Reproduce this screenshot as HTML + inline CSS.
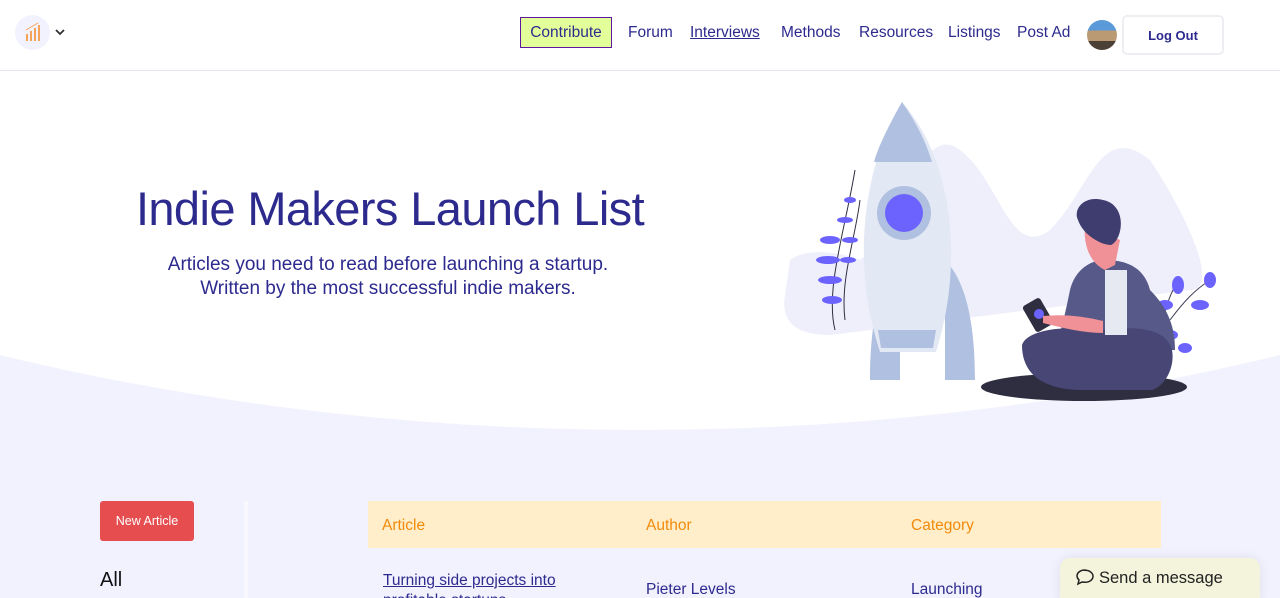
<!DOCTYPE html>
<html><head><meta charset="utf-8"><style>
*{margin:0;padding:0;box-sizing:border-box}
html,body{width:1280px;height:598px;overflow:hidden}
body{background:#f2f2fe;font-family:"Liberation Sans",sans-serif;position:relative}
.hero{position:absolute;left:-1200px;top:-1970px;width:3680px;height:2400px;border-radius:50%;background:#fff}
nav{position:absolute;left:0;top:0;width:1280px;height:71px;background:#fff;border-bottom:1px solid #e6e6ee}
.logo{position:absolute;left:15px;top:15px;width:35px;height:35px;border-radius:50%;background:#f2f2fe}
.chev{position:absolute;left:54px;top:26px}
.l{position:absolute;top:24px;font-size:15.5px;color:#2d2a8e;white-space:nowrap}
.contrib{position:absolute;left:520px;top:17px;width:92px;height:31px;background:#e3ff9a;border:1px solid #5b1aa0;font-size:15.5px;color:#2d2a8e;text-align:center;line-height:29px}
.avatar{position:absolute;left:1087px;top:20px;width:30px;height:30px;border-radius:50%;background:linear-gradient(#5b9ad8 0 35%,#b99a72 35% 70%,#4b4035 70%)}
.logout{position:absolute;left:1122px;top:15px;width:102px;height:40px;border:2px solid #eeeef2;border-radius:5px;font-weight:bold;font-size:13px;color:#2d2a8e;text-align:center;line-height:37px}
h1{position:absolute;left:0;width:780px;top:181px;text-align:center;font-size:47px;font-weight:normal;color:#2d2a8e;letter-spacing:-.6px}
.sub{position:absolute;left:0;width:776px;top:253px;text-align:center;font-size:19px;line-height:24px;color:#2d2a8e}
.btn{position:absolute;left:100px;top:501px;width:94px;height:40px;background:#e54d4f;border-radius:3px;color:#fff;font-size:12.5px;text-align:center;line-height:40px}
.all{position:absolute;left:100px;top:569px;font-size:20px;color:#111}
.vline{position:absolute;left:244px;top:501px;width:4px;height:100px;background:#f8f8fe}
.thead{position:absolute;left:368px;top:501px;width:793px;height:47px;background:#ffeec9;color:#f28a0c;font-size:15.5px}
.thead span,.row span{position:absolute;top:16px}
.row{position:absolute;left:368px;top:548px;width:793px;height:60px;color:#2d2a8e;font-size:15.5px}
.msg{position:absolute;left:1060px;top:558px;width:200px;height:50px;background:#f3f4db;border-radius:10px;box-shadow:0 0 12px rgba(0,0,0,.08);font-size:16.5px;color:#222;padding:10px 0 0 15px}
</style></head><body>
<div class="hero"></div>
<nav>
<div class="logo"><svg width="35" height="35"><g fill="#f6a35a"><rect x="11" y="19" width="2" height="7"/><rect x="15" y="16" width="2" height="10"/><rect x="19" y="13" width="2" height="13"/><rect x="23" y="10" width="2" height="16"/></g><path d="M11 15l12-7" stroke="#f6a35a" stroke-width="1"/></svg></div>
<svg class="chev" width="12" height="12"><path d="M2 4l4 4 4-4" stroke="#333" stroke-width="1.8" fill="none"/></svg>
<div class="contrib">Contribute</div>
<span class="l" style="left:628px">Forum</span>
<span class="l" style="left:690px;text-decoration:underline">Interviews</span>
<span class="l" style="left:781px">Methods</span>
<span class="l" style="left:859px">Resources</span>
<span class="l" style="left:948px">Listings</span>
<span class="l" style="left:1017px">Post Ad</span>
<div class="avatar"></div>
<div class="logout">Log Out</div>
</nav>
<h1>Indie Makers Launch List</h1>
<div class="sub">Articles you need to read before launching a startup.<br>Written by the most successful indie makers.</div>
<svg style="position:absolute;left:760px;top:90px" width="480" height="320">
<path d="M30 170c20-15 60-5 70 0 50-40 60-140 100-110 40 30 50 110 90 80 40-40 50-110 100-70 40 60 70 130 40 130L70 245c-30 0-50-10-45-40z" fill="#efeffc"/>
<ellipse cx="324" cy="297" rx="103" ry="14" fill="#2f2e41"/>
<g stroke="#2f2e41" stroke-width="1" fill="none"><path d="M95 80c-10 60-30 120-20 160"/><path d="M100 110c-5 40-20 80-15 120"/></g>
<g fill="#6c63ff"><ellipse cx="70" cy="150" rx="10" ry="4"/><ellipse cx="68" cy="170" rx="12" ry="4"/><ellipse cx="70" cy="190" rx="12" ry="4"/><ellipse cx="72" cy="210" rx="10" ry="4"/><ellipse cx="85" cy="130" rx="8" ry="3"/><ellipse cx="90" cy="110" rx="6" ry="3"/><ellipse cx="90" cy="150" rx="8" ry="3"/><ellipse cx="88" cy="170" rx="8" ry="3"/></g>
<path d="M110 290c0-60 10-100 30-120l0 120zM215 290c0-60-10-100-30-120l0 120z" fill="#b0c0e0"/>
<path d="M142 12c-25 40-40 100-38 160 1 40 10 70 16 90h56c6-20 14-50 15-90 2-60-14-120-49-160z" fill="#e3e8f5"/>
<path d="M142 12c-14 25-24 45-28 60h58c-6-20-16-40-30-60z" fill="#b0c0e0"/>
<path d="M118 240h58l-3 18h-52z" fill="#b0c0e0"/>
<circle cx="144" cy="123" r="27" fill="#b0c0e0"/><circle cx="144" cy="123" r="19" fill="#6c63ff"/>
<path d="M400 260c0-30 10-60 20-70M410 230c15-20 25-30 40-40" stroke="#3f3d56" fill="none"/>
<g fill="#6c63ff"><ellipse cx="405" cy="215" rx="8" ry="5"/><ellipse cx="418" cy="195" rx="6" ry="9"/><ellipse cx="450" cy="190" rx="6" ry="8"/><ellipse cx="440" cy="215" rx="9" ry="5"/><ellipse cx="410" cy="245" rx="8" ry="5"/><ellipse cx="425" cy="258" rx="7" ry="5"/></g>
<path d="M345 170c-15 0-30 10-35 30-5 25-10 45-15 60h120c0-20-5-40-25-60-5-20-20-30-45-30z" fill="#575a89"/>
<path d="M262 255c5-15 40-20 80-15 40-5 65 0 70 20 3 15-5 35-20 40h-70c-30 0-60-10-60-45z" fill="#474675"/>
<rect x="345" y="180" width="22" height="65" fill="#e6e8f2"/>
<path d="M325 135c-2 20 5 38 20 45l10-5 5-25z" fill="#f09097"/>
<path d="M318 130c-5-10 5-25 25-20 25 5 20 40 8 45-10 0-28-10-33-25z" fill="#3f3d70"/>
<rect x="268" y="210" width="20" height="30" rx="3" transform="rotate(-30 278 225)" fill="#2f2e41"/>
<circle cx="279" cy="224" r="5" fill="#6c63ff"/>
<path d="M283 226c20-2 40 0 60 5v12c-20 0-40-5-60-10z" fill="#f09097"/>
</svg>
<div class="btn">New Article</div>
<div class="all">All</div>
<div class="vline"></div>
<div class="thead"><span style="left:14px">Article</span><span style="left:278px">Author</span><span style="left:543px">Category</span></div>
<div class="row"><span style="left:15px;top:23px;text-decoration:underline;line-height:20px">Turning side projects into<br>profitable startups</span><span style="left:278px;top:33px">Pieter Levels</span><span style="left:543px;top:33px">Launching</span></div>
<div class="msg"><svg width="20" height="18" style="vertical-align:-3px;margin-right:4px"><path d="M10 2c-5 0-8 3-8 6 0 2 1 3 2 4l-1 4 4-2c1 0 2 .3 3 .3 5 0 8-3 8-6s-3-6-8-6z" stroke="#222" stroke-width="1.5" fill="none"/></svg>Send a message</div>
</body></html>
